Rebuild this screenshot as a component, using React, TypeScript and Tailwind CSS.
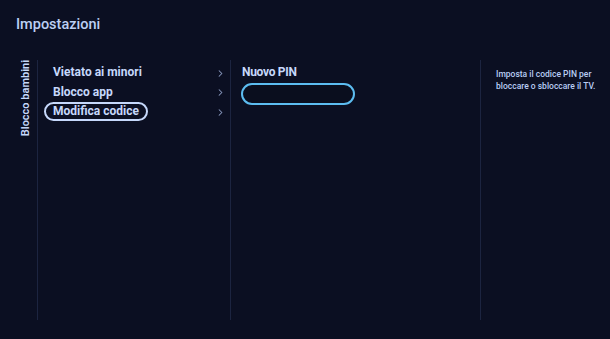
import { ChevronRight } from 'lucide-react';

const items = ['Vietato ai minori', 'Blocco app', 'Modifica codice'];

export default function App() {
  return (
    <div
      className="w-[610px] h-[339px] overflow-hidden bg-[#0b0f22] text-[#c6d8fb] flex flex-col"
      style={{ fontFamily: 'Roboto, "Liberation Sans", sans-serif' }}
    >
      {/* Titolo */}
      <div className="pl-[16px] pt-[16px] h-[60px] text-[14.5px] leading-[18px] font-medium text-[#bcd0f4]">
        Impostazioni
      </div>

      <div className="flex h-[260px]">
        {/* Barra laterale verticale */}
        <div className="w-[38px] border-r border-[#1c2440] flex justify-end pr-[5px]">
          <span className="[writing-mode:vertical-rl] rotate-180 text-[11px] font-semibold leading-[12px] h-fit">
            Blocco bambini
          </span>
        </div>

        {/* Colonna menu */}
        <div className="w-[193px] border-r border-[#1c2440] pl-[6px] pr-[4px] pt-[3px] flex flex-col">
          {items.map((label, i) => (
            <div key={label} className="flex items-center justify-between h-[19.5px]">
              <span
                className={`text-[12px] font-bold leading-[15px] px-[7px] rounded-full border-2 ${
                  i === 2 ? 'border-[#c6d8fb]' : 'border-transparent'
                }`}
              >
                {label}
              </span>
              <ChevronRight className="w-[11px] h-[11px] mt-[1px] text-[#8b9bc2]" strokeWidth={2.2} />
            </div>
          ))}
        </div>

        {/* Colonna PIN */}
        <div className="w-[250px] border-r border-[#1c2440] pl-[10px] pt-[4px] flex flex-col">
          <span className="text-[12px] font-bold leading-[16px] pl-[1px] tracking-[-0.3px]">Nuovo PIN</span>
          <div className="mt-[3px] w-[114px] h-[22px] rounded-full border-2 border-[#5cbcf0] bg-[#0a0e1e]" />
        </div>

        {/* Descrizione */}
        <div className="flex-1 pl-[15px] pt-[8px] text-[8.5px] font-medium leading-[12px] text-[#b9cdf4]">
          Imposta il codice PIN per
          <br />
          bloccare o sbloccare il TV.
        </div>
      </div>
    </div>
  );
}
